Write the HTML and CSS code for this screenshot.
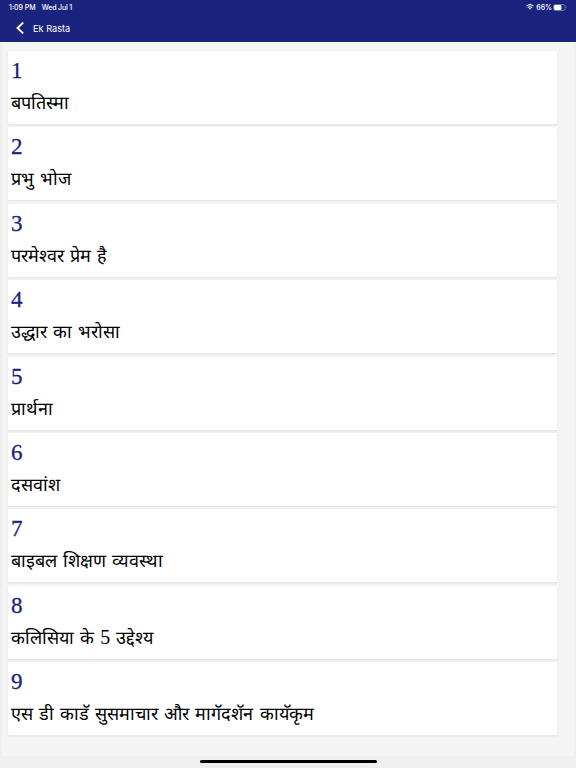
FILE: index.html
```html
<!DOCTYPE html>
<html lang="hi">
<head>
  <meta charset="UTF-8" />
  <meta name="viewport" content="width=device-width, initial-scale=1.0"/>
  <title>Ek Rasta</title>
  <link rel="stylesheet" href="styles.css">
</head>
<body>
  <header>
    <div class="status-bar">
      <span class="time">1:09 PM</span>
      <span class="date">Wed Jul 1</span>
      <svg class="wifi" width="8" height="6" viewBox="0 0 8 6" fill="none" stroke="#fff" stroke-width="1.1">
        <path d="M.5 2.1Q4-.9 7.5 2.1M1.8 3.6Q4 1.8 6.2 3.6"/>
        <path d="M2.9 4.5Q4 3.7 5.1 4.5L4 5.8Z" fill="#fff" stroke="none"/>
      </svg>
      <span class="percent">66%</span>
      <svg class="battery" width="14" height="7" viewBox="0 0 14 7">
        <rect x=".5" y=".5" width="11.6" height="6" rx="1.8" fill="none" stroke="#8c90c4" stroke-width=".7"/>
        <rect x="1.1" y="1.1" width="7.3" height="4.8" rx="1" fill="#fff"/>
        <path d="M12.9 2.4Q14 3.5 12.9 4.6Z" fill="#8c90c4"/>
      </svg>
    </div>
    <div class="nav-bar">
      <svg class="back" width="8" height="12" viewBox="0 0 8 12" fill="none" stroke="#fff" stroke-width="1.9">
        <path d="M7.2 .6L1.5 6L7.2 11.4"/>
      </svg>
      <h1>Ek Rasta</h1>
    </div>
  </header>

  <main class="list">
    <div class="card">
      <div class="number">1</div>
      <div class="title">बपतिस्मा</div>
    </div>
    <div class="card">
      <div class="number">2</div>
      <div class="title">प्रभु भोज</div>
    </div>
    <div class="card">
      <div class="number">3</div>
      <div class="title">परमेश्वर प्रेम है</div>
    </div>
    <div class="card">
      <div class="number">4</div>
      <div class="title">उद्धार का भरोसा</div>
    </div>
    <div class="card">
      <div class="number">5</div>
      <div class="title">प्रार्थना</div>
    </div>
    <div class="card">
      <div class="number">6</div>
      <div class="title">दसवांश</div>
    </div>
    <div class="card">
      <div class="number">7</div>
      <div class="title">बाइबल शिक्षण व्यवस्था</div>
    </div>
    <div class="card">
      <div class="number">8</div>
      <div class="title">कलिसिया के <span class="digit">5</span> उद्देश्य</div>
    </div>
    <div class="card">
      <div class="number">9</div>
      <div class="title">एस डी काडॅ सुसमाचार और मागॅदशॅन कायॅकृम</div>
    </div>
  </main>

  <footer>
    <div class="home-indicator"></div>
  </footer>
</body>
</html>
```

FILE: styles.css
```css
* {
  margin: 0; padding: 0; box-sizing: border-box;
}
body {
  display: flex;
  flex-direction: column;
  height: 768px;
  overflow: hidden;
  font-family: Inter, sans-serif;
  background-color: #efefef;
}
header {
  height: 42px;
  background-color: #1a237e;
  color: white;
}
.status-bar {
  display: flex;
  align-items: center;
  height: 14px;
  padding: 0 9px;
  font-size: 7px;
  font-weight: 500;
}
.date {
  margin-left: 6px;
  letter-spacing: -0.15px;
}
.wifi {
  margin-left: auto;
  margin-right: 2px;
}
.battery {
  margin-left: 1px;
}
.nav-bar {
  display: flex;
  align-items: center;
  height: 28px;
  padding-left: 16px;
}
.nav-bar h1 {
  margin-left: 9px;
  font-size: 9.2px;
  font-weight: 400;
}
.list {
  flex: 1;
  display: flex;
  flex-direction: column;
  gap: 3.4px;
  margin: 0 2px;
  padding: 9px 17px 0 6px;
  background-color: #f4f4f4;
}
.card {
  height: 73px;
  padding: 7px 3px 0;
  background-color: white;
  box-shadow: 0 1px 2px rgba(0,0,0,0.08);
}
.number {
  height: 25px;
  line-height: 25px;
  font-family: "Liberation Serif", serif;
  font-size: 23px;
  color: #1a237e;
  -webkit-text-stroke: 0.3px #1a237e;
}
.title {
  height: 40px;
  line-height: 41px;
  font-family: "Liberation Serif", serif;
  font-size: 18px;
  word-spacing: 1.6px;
  color: black;
  white-space: nowrap;
}
.digit {
  font-size: 20px;
  line-height: 1;
}
footer {
  display: flex;
  justify-content: center;
  height: 12px;
  padding-top: 4px;
}
.home-indicator {
  width: 177px;
  height: 3px;
  border-radius: 2px;
  background-color: black;
}
```
